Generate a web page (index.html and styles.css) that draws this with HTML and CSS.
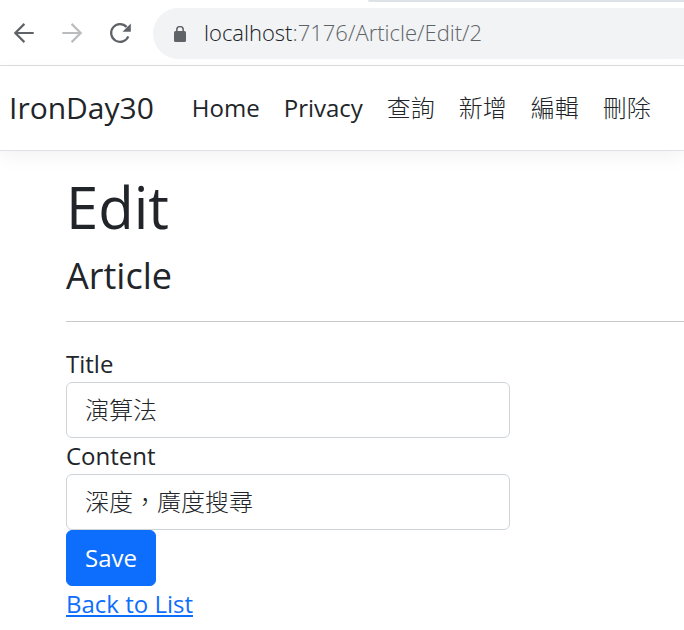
FILE: index.html
```
<!DOCTYPE html>
<html lang="zh-Hant">

<head>
    <meta charset="utf-8" />
    <meta name="viewport" content="width=device-width, initial-scale=1.0" />
    <title>Edit - IronDay30</title>
    <link rel="stylesheet" href="styles.css">
</head>

<body>
    <div class="browser">
        <div class="tab-strip"></div>
        <div class="toolbar">
            <button type="button" class="tool" aria-label="Back">
                <svg width="24" height="24" viewBox="0 0 24 24" fill="none" stroke="currentColor" stroke-width="2.2">
                    <path d="M21.7 11H3.5M12.4 1.9L3.3 11l9.1 9.1" />
                </svg>
            </button>
            <button type="button" class="tool" aria-label="Forward" disabled>
                <svg width="24" height="24" viewBox="0 0 24 24" fill="none" stroke="currentColor" stroke-width="2.2">
                    <path d="M2.3 11h18.2M11.6 1.9l9.1 9.1-9.1 9.1" />
                </svg>
            </button>
            <button type="button" class="tool" aria-label="Reload">
                <svg width="24" height="24" viewBox="0 0 24 24">
                    <path d="M20.3 14.3A8.9 8.9 0 1 1 18.6 4.9" fill="none" stroke="currentColor" stroke-width="2.2" />
                    <path d="M22.8 1.5v8.3h-8.3z" fill="currentColor" />
                </svg>
            </button>
            <div class="address">
                <svg class="lock" width="12" height="16" viewBox="0 0 12 16">
                    <rect x="0" y="5" width="12" height="11" rx="1.5" fill="currentColor" />
                    <path d="M2.8 6V3.8a3.2 3.2 0 0 1 6.4 0V6" fill="none" stroke="currentColor" stroke-width="1.5" />
                </svg>
                <span class="url"><span class="host">localhost</span>:7176/Article/Edit/2</span>
            </div>
        </div>
    </div>

    <header>
        <nav class="navbar">
            <a class="brand" href="#">IronDay30</a>
            <ul class="nav-list">
                <li><a href="#">Home</a></li>
                <li><a href="#">Privacy</a></li>
                <li><a class="zh" href="#">查詢</a></li>
                <li><a class="zh" href="#">新增</a></li>
                <li><a class="zh" href="#">編輯</a></li>
                <li><a class="zh" href="#">刪除</a></li>
            </ul>
        </nav>
    </header>

    <main>
        <h1>Edit</h1>
        <h4>Article</h4>
        <hr />
        <form class="edit-form">
            <label for="Title">Title</label>
            <input type="text" id="Title" name="Title" value="演算法" />
            <label for="Content">Content</label>
            <input type="text" id="Content" name="Content" value="深度，廣度搜尋" />
            <button type="submit" class="save">Save</button>
        </form>
        <a class="back" href="#">Back to List</a>
    </main>
</body>

</html>
```

FILE: styles.css
```
* {
    box-sizing: border-box;
}

body {
    margin: 0;
    font-family: "Open Sans", "Noto Sans CJK TC", sans-serif;
    font-size: 24px;
    line-height: 36px;
    color: #212529;
    background-color: #fff;
    overflow-x: hidden;
}

/* browser bar */

.browser {
    border-bottom: 1px solid #dadce0;
}

.tab-strip {
    height: 2px;
    margin-left: 368px;
    background-color: #dee1e6;
    border-bottom-left-radius: 8px;
}

.toolbar {
    display: flex;
    align-items: center;
    gap: 24px;
    padding: 6px 0 6px 12px;
}

.tool {
    display: flex;
    padding: 0;
    border: 0;
    background: none;
    color: #5f6368;
}

.tool:disabled {
    color: #babcbe;
}

.address {
    flex: 1;
    display: flex;
    align-items: center;
    gap: 18px;
    height: 51px;
    margin-left: -3px;
    padding-left: 21px;
    background-color: #f1f3f4;
    border-radius: 26px 0 0 26px;
}

.lock {
    color: #5f6368;
}

.url {
    padding-bottom: 3px;
    font-size: 22px;
    font-weight: 300;
    color: #5f6368;
    white-space: nowrap;
}

.host {
    color: #202124;
}

/* site navigation */

header {
    border-bottom: 1px solid #dee2e6;
    box-shadow: 0 6px 18px rgba(0, 0, 0, 0.05);
}

.navbar {
    display: flex;
    align-items: center;
    height: 84px;
    padding-left: 9px;
}

.navbar a {
    color: #212529;
    text-decoration: none;
}

.brand {
    margin-right: 38px;
    font-size: 30px;
}

.nav-list {
    display: flex;
    gap: 24px;
    margin: 0;
    padding: 0;
    list-style: none;
    white-space: nowrap;
}

.zh {
    font-weight: 300;
}

/* page */

main {
    padding: 20px 0 8px 66px;
}

h1,
h4 {
    margin: 0;
    font-weight: 400;
}

h1 {
    margin-bottom: 12px;
    font-size: 58px;
    line-height: 72px;
}

h4 {
    font-size: 36px;
    line-height: 42px;
}

hr {
    margin: 24px 0;
    border: 0;
    border-top: 1px solid #c8c9ca;
}

.edit-form {
    display: flex;
    flex-direction: column;
    align-items: flex-start;
    width: 100%;
    max-width: 444px;
}

.edit-form input {
    width: 100%;
    height: 56px;
    padding: 6px 18px 9px;
    border: 1px solid #ced4da;
    border-radius: 6px;
    font: inherit;
    font-weight: 300;
    color: #212529;
    background-color: #fff;
}

.save {
    height: 56px;
    padding: 9px 18px;
    border: 1px solid #0d6efd;
    border-radius: 6px;
    font: inherit;
    color: #fff;
    background-color: #0d6efd;
}

.back {
    color: #0d6efd;
}
```
